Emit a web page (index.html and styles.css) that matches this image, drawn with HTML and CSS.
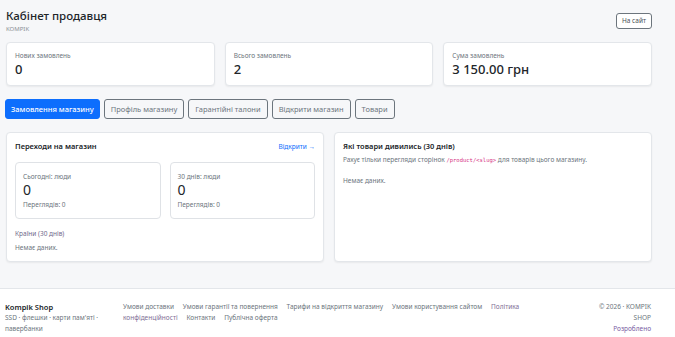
FILE: index.html
```html
<!DOCTYPE html>
<html lang="uk">
<head>
<meta charset="utf-8">
<title>Кабінет продавця</title>
<link rel="stylesheet" href="styles.css">
</head>
<body>
<main class="wrap">
  <header class="head">
    <div>
      <h1 class="title">Кабінет продавця</h1>
      <div class="sub">KOMPIK</div>
    </div>
    <a class="btn-site" href="#">На сайт</a>
  </header>

  <section class="stats">
    <div class="card stat">
      <div class="label">Нових замовлень</div>
      <div class="value">0</div>
    </div>
    <div class="card stat">
      <div class="label">Всього замовлень</div>
      <div class="value">2</div>
    </div>
    <div class="card stat">
      <div class="label">Сума замовлень</div>
      <div class="value">3 150.00 грн</div>
    </div>
  </section>

  <nav class="tabs">
    <a class="tab active" href="#">Замовлення магазину</a>
    <a class="tab" href="#">Профіль магазину</a>
    <a class="tab" href="#">Гарантійні талони</a>
    <a class="tab" href="#">Відкрити магазин</a>
    <a class="tab" href="#">Товари</a>
  </nav>

  <section class="panels">
    <div class="card panel">
      <div class="panel-head">
        <h2 class="ptitle">Переходи на магазин</h2>
        <a class="plink" href="#">Відкрити →</a>
      </div>
      <div class="mini-row">
        <div class="mini">
          <div class="mlabel">Сьогодні: люди</div>
          <div class="mvalue">0</div>
          <div class="mlabel">Переглядів: 0</div>
        </div>
        <div class="mini">
          <div class="mlabel">30 днів: люди</div>
          <div class="mvalue">0</div>
          <div class="mlabel">Переглядів: 0</div>
        </div>
      </div>
      <div class="countries">Країни (30 днів)</div>
      <div class="empty">Немає даних.</div>
    </div>
    <div class="card panel">
      <h2 class="ptitle">Які товари дивились (30 днів)</h2>
      <p class="note">Рахує тільки перегляди сторінок <code>/product/&lt;slug&gt;</code> для товарів цього магазину.</p>
      <div class="empty empty2">Немає даних.</div>
    </div>
  </section>
</main>

<footer class="foot">
  <div class="foot-in">
    <div class="brand">
      <div class="bname">Kompik Shop</div>
      <div class="btext">SSD · флешки · карти пам'яті · павербанки</div>
    </div>
    <div class="links">
      <a href="#">Умови доставки</a>
      <a href="#">Умови гарантії та повернення</a>
      <a href="#">Тарифи на відкриття магазину</a>
      <a href="#">Умови користування сайтом</a>
      <a href="#" class="vis">Політика конфіденційності</a>
      <a href="#">Контакти</a>
      <a href="#">Публічна оферта</a>
    </div>
    <div class="copy">
      <div>© 2026 · KOMPIK SHOP</div>
      <div class="dev">Розроблено</div>
    </div>
  </div>
</footer>
</body>
</html>
```

FILE: styles.css
```css
* { box-sizing: border-box; }
html, body { margin: 0; padding: 0; }
body {
  background: #f6f7f9;
  font-family: "Noto Sans", "Open Sans", sans-serif;
  color: #212529;
  font-size: 7px;
  line-height: 1.5;
}
a { text-decoration: none; }

.wrap {
  width: 646px;
  margin-left: 6px;
  padding-top: 6px;
  height: 288px;
}

.head {
  display: flex;
  justify-content: space-between;
  align-items: flex-start;
}
.title {
  margin: 0;
  font-size: 11.5px;
  font-weight: 500;
  line-height: 19px;
}
.sub {
  font-size: 6px;
  color: #8a9097;
  line-height: 8px;
}
.btn-site {
  margin-top: 7px;
  border: 1px solid #6c757d;
  border-radius: 3px;
  color: #495057;
  font-size: 6.5px;
  padding: 3px 5px;
  line-height: 8px;
  background: #fff;
}

.card {
  background: #fff;
  border: 1px solid #e3e6ea;
  border-radius: 4px;
  box-shadow: 0 1px 2px rgba(0,0,0,0.06);
}

.stats {
  margin-top: 9px;
  display: grid;
  grid-template-columns: repeat(3, 1fr);
  gap: 10px;
}
.stat {
  height: 44px;
  padding: 8px 8px;
}
.label {
  font-size: 6.5px;
  color: #6c757d;
  line-height: 10px;
}
.value {
  font-size: 13px;
  font-weight: 500;
  line-height: 16px;
}

.tabs {
  margin-top: 13px;
  display: flex;
  gap: 4px;
}
.tab {
  border: 1px solid #6c757d;
  border-radius: 3px;
  color: #6c757d;
  font-size: 7.5px;
  line-height: 18px;
  height: 20px;
  padding: 0 6px;
  background: transparent;
}
.tab:first-child { margin-left: -1px; }
.tab.active {
  background: #0d6efd;
  border-color: #0d6efd;
  color: #fff;
  font-weight: 500;
  padding: 0 5px;
}

.panels {
  margin-top: 13px;
  display: grid;
  grid-template-columns: 1fr 1fr;
  gap: 10px;
}
.panel {
  height: 130px;
  padding: 8px 8px;
}
.panel-head {
  display: flex;
  justify-content: space-between;
  align-items: center;
}
.ptitle {
  margin: 0;
  font-size: 7.5px;
  font-weight: 600;
  line-height: 11px;
}
.plink {
  color: #0d6efd;
  font-size: 6.5px;
}
.mini-row {
  margin-top: 10px;
  display: grid;
  grid-template-columns: 1fr 1fr;
  gap: 9px;
}
.mini {
  border: 1px solid #dfe2e6;
  border-radius: 4px;
  height: 57px;
  padding: 9px 7px;
}
.mlabel {
  font-size: 6.5px;
  color: #6c757d;
  line-height: 9px;
}
.mvalue {
  font-size: 14px;
  line-height: 17px;
  margin-bottom: 2px;
}
.countries {
  margin-top: 10px;
  color: #6f6a8a;
  font-size: 6.5px;
  line-height: 9px;
}
.empty {
  margin-top: 5px;
  color: #6c757d;
  font-size: 6.5px;
  line-height: 9px;
}
.note {
  margin: 3px 0 0;
  color: #6c757d;
  font-size: 6.5px;
  line-height: 9px;
}
.note code {
  color: #d63384;
  font-family: "DejaVu Sans Mono", monospace;
  font-size: 5.5px;
}
.empty2 { margin-top: 11px; }

.foot {
  background: #fff;
  border-top: 1px solid #e3e6ea;
  height: 60px;
}
.foot-in {
  width: 646px;
  margin-left: 5px;
  display: flex;
  align-items: flex-start;
  padding-top: 12px;
}
.brand { width: 105px; }
.bname {
  font-size: 7.5px;
  font-weight: 600;
  line-height: 12px;
}
.btext {
  color: #6c757d;
  font-size: 6.5px;
  line-height: 10.5px;
}
.links {
  margin-left: 13px;
  width: 410px;
  line-height: 11px;
}
.links a {
  color: #6c757d;
  font-size: 6.5px;
  margin-right: 7px;
}
.links a.vis { color: #7f6f96; }
.copy {
  margin-left: auto;
  width: 70px;
  text-align: right;
  color: #6c757d;
  font-size: 6.5px;
  line-height: 11px;
}
.dev { color: #7a5ea3; }
```
